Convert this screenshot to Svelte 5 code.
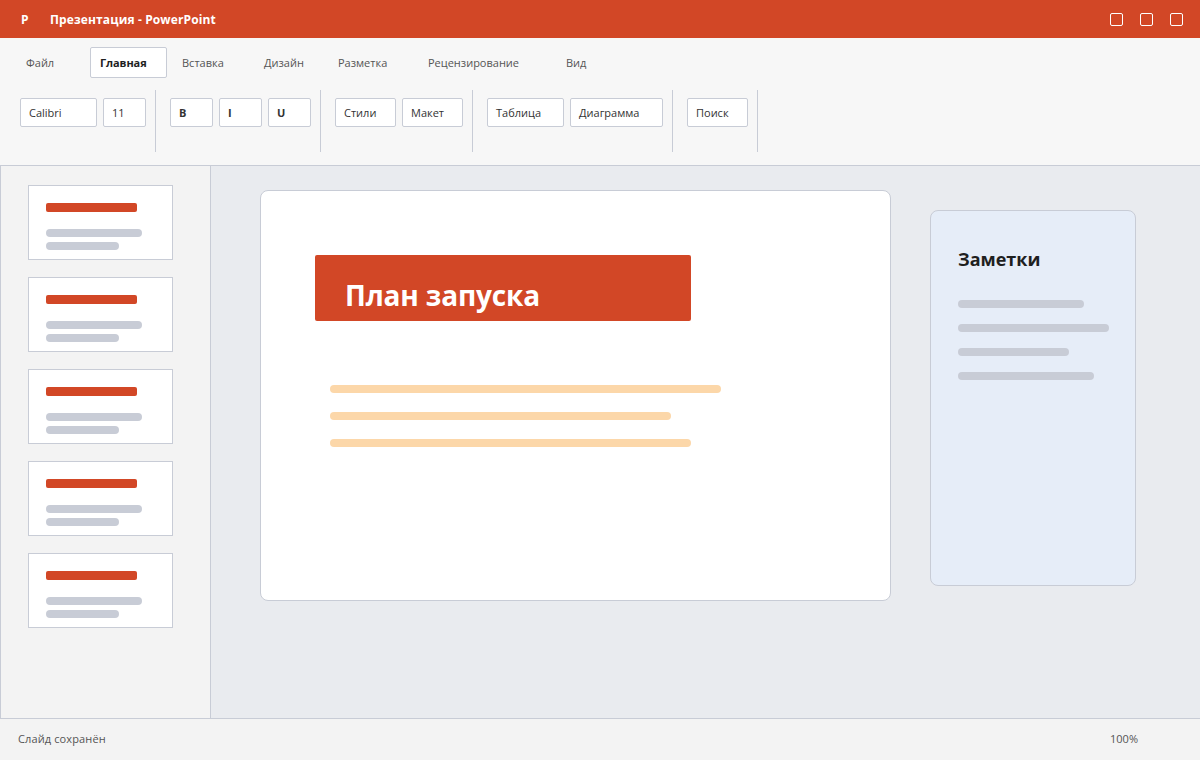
<script>
  const tabs = ['Файл', 'Главная', 'Вставка', 'Дизайн', 'Разметка', 'Рецензирование', 'Вид'];
  const groups = [
    [{ t: 'Calibri', w: 77 }, { t: '11', w: 43 }],
    [{ t: 'B', w: 43, b: true }, { t: 'I', w: 43, b: true }, { t: 'U', w: 43, b: true }],
    [{ t: 'Стили', w: 61 }, { t: 'Макет', w: 61 }],
    [{ t: 'Таблица', w: 77 }, { t: 'Диаграмма', w: 93 }],
    [{ t: 'Поиск', w: 61 }]
  ];
  const slides = [1, 2, 3, 4, 5];
  const bodyLines = [391, 341, 361];
  const noteLines = [126, 151, 111, 136];
</script>

<div class="app">
  <header class="titlebar">
    <span class="logo">P</span>
    <span class="doc">Презентация - PowerPoint</span>
    <div class="win">
      <span></span>
      <span></span>
      <span></span>
    </div>
  </header>

  <section class="ribbon">
    <nav class="tabs">
      {#each tabs as tab}
        <div class="tab" class:active={tab === 'Главная'}>{tab}</div>
      {/each}
    </nav>
    <div class="tools">
      {#each groups as group}
        <div class="group">
          {#each group as btn}
            <button class="tool" class:bold={btn.b} style="width:{btn.w}px">{btn.t}</button>
          {/each}
        </div>
      {/each}
    </div>
  </section>

  <div class="workspace">
    <aside class="thumbs">
      {#each slides as n (n)}
        <div class="thumb">
          <div class="t-head"></div>
          <div class="t-line"></div>
          <div class="t-line short"></div>
        </div>
      {/each}
    </aside>

    <main class="stage">
      <div class="slide">
        <div class="slide-title">План запуска</div>
        <div class="slide-body">
          {#each bodyLines as w}
            <div class="body-line" style="width:{w}px"></div>
          {/each}
        </div>
      </div>

      <div class="notes">
        <h2>Заметки</h2>
        <div class="note-lines">
          {#each noteLines as w}
            <div class="note-line" style="width:{w}px"></div>
          {/each}
        </div>
      </div>
    </main>
  </div>

  <footer class="status">
    <span class="saved">Слайд сохранён</span>
    <span class="zoom">100%</span>
  </footer>
</div>

<style>
  :global(body) {
    margin: 0;
  }

  .app {
    width: 1200px;
    height: 760px;
    display: flex;
    flex-direction: column;
    overflow: hidden;
    background: #e9ebef;
    color: #1f1f1f;
    font-family: "Open Sans", "Noto Sans", sans-serif;
    font-size: 11px;
  }

  /* title bar */
  .titlebar {
    flex: 0 0 38px;
    display: flex;
    align-items: center;
    background: #d24726;
    color: #fff;
    font-size: 12px;
    font-weight: 700;
    padding: 0 17px 0 21px;
    box-sizing: border-box;
  }
  .logo {
    width: 29px;
  }
  .doc {
    letter-spacing: 0.13px;
  }
  .win {
    margin-left: auto;
    display: flex;
    gap: 17px;
  }
  .win span {
    width: 13px;
    height: 13px;
    box-sizing: border-box;
    border: 1px solid #fff;
    border-radius: 2px;
  }

  /* ribbon */
  .ribbon {
    flex: 0 0 128px;
    box-sizing: border-box;
    background: #f7f7f7;
    border-bottom: 1px solid #c8ccd6;
    padding: 9px 0 0 16px;
  }
  .tabs {
    display: grid;
    grid-template-columns: 69px 77px 77px 69px 85px 133px 60px;
    column-gap: 5px;
    height: 31px;
  }
  .tab {
    box-sizing: border-box;
    padding: 0 9px;
    border: 1px solid transparent;
    border-radius: 2px;
    color: #555;
    line-height: 29px;
  }
  .tab.active {
    background: #fff;
    border-color: #c8ccd6;
    color: #1f1f1f;
    font-weight: 700;
    letter-spacing: -0.1px;
  }
  .tools {
    display: flex;
    margin: 12px 0 0 4px;
  }
  .group {
    display: flex;
    gap: 6px;
    height: 62px;
    padding: 8px 9px 0 0;
    box-sizing: border-box;
    margin-right: 14px;
    border-right: 1px solid #c8ccd6;
  }
  .tool {
    height: 29px;
    box-sizing: border-box;
    padding: 0 8px;
    background: #fff;
    border: 1px solid #c8ccd6;
    border-radius: 2px;
    color: #333;
    font: inherit;
    text-align: left;
  }
  .tool.bold {
    font-weight: 700;
  }

  /* workspace */
  .workspace {
    flex: 1;
    display: flex;
    min-height: 0;
  }
  .thumbs {
    width: 211px;
    box-sizing: border-box;
    background: #f3f3f3;
    border-left: 1px solid #c8ccd6;
    border-right: 1px solid #c8ccd6;
    padding: 19px 0 0 27px;
    display: flex;
    flex-direction: column;
    gap: 17px;
  }
  .thumb {
    width: 145px;
    height: 75px;
    box-sizing: border-box;
    background: #fff;
    border: 1px solid #c8ccd6;
    padding: 17px 0 0 17px;
  }
  .t-head {
    width: 91px;
    height: 9px;
    background: #d24726;
    border-radius: 2px;
    margin-bottom: 17px;
  }
  .t-line {
    width: 96px;
    height: 8px;
    background: #c8ccd6;
    border-radius: 4px;
    margin-bottom: 5px;
  }
  .t-line.short {
    width: 73px;
  }

  .stage {
    flex: 1;
    display: flex;
    align-items: flex-start;
    padding: 24px 0 0 49px;
  }
  .slide {
    width: 631px;
    height: 411px;
    box-sizing: border-box;
    background: #fff;
    border: 1px solid #c8ccd6;
    border-radius: 8px;
    padding: 64px 0 0 54px;
  }
  .slide-title {
    width: 376px;
    height: 66px;
    box-sizing: border-box;
    background: #d24726;
    border-radius: 2px;
    color: #fff;
    font-size: 28px;
    font-weight: 700;
    letter-spacing: -0.17px;
    padding: 19px 0 0 30px;
    line-height: 42px;
  }
  .slide-body {
    margin: 64px 0 0 15px;
    display: flex;
    flex-direction: column;
    gap: 19px;
  }
  .body-line {
    height: 8px;
    border-radius: 4px;
    background: #fcd7a9;
  }

  .notes {
    width: 206px;
    height: 376px;
    box-sizing: border-box;
    margin: 20px 0 0 39px;
    background: #e6edf8;
    border: 1px solid #c8ccd6;
    border-radius: 8px;
    padding: 0 0 0 27px;
  }
  .notes h2 {
    margin: 0;
    padding-top: 36px;
    font-size: 18px;
    font-weight: 700;
    line-height: 25px;
    color: #1f1f1f;
  }
  .note-lines {
    margin-top: 28px;
    display: flex;
    flex-direction: column;
    gap: 16px;
  }
  .note-line {
    height: 8px;
    border-radius: 4px;
    background: #c8ccd6;
  }

  /* status bar */
  .status {
    flex: 0 0 42px;
    box-sizing: border-box;
    display: flex;
    align-items: center;
    justify-content: space-between;
    background: #f3f3f3;
    border-top: 1px solid #c8ccd6;
    padding: 0 62px 2px 18px;
    color: #555;
  }
  .saved {
    letter-spacing: 0.12px;
  }
</style>
